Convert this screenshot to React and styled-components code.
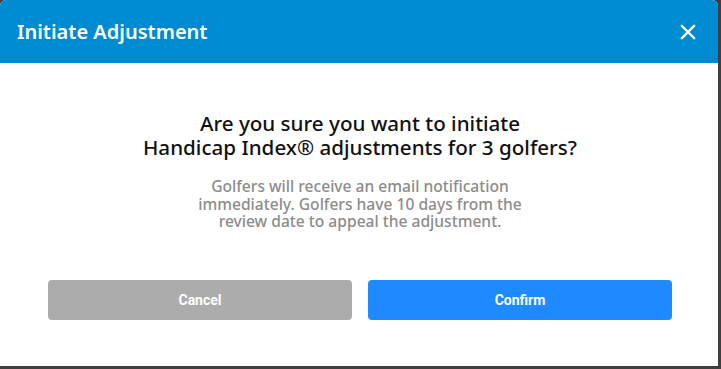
import React from 'react';
import styled, { createGlobalStyle } from 'styled-components';

const Global = createGlobalStyle`
  html, body {
    margin: 0;
    padding: 0;
    background: #3f3f3f;
  }
  body {
    font-family: "Noto Sans", "Open Sans", sans-serif;
  }
`;

const Modal = styled.section`
  width: 718px;
  height: 366px;
  background: #fff;
  border-radius: 6px 6px 0 0;
  overflow: hidden;
  display: flex;
  flex-direction: column;
`;

const Header = styled.header`
  height: 63px;
  background: #008ad2;
  display: flex;
  align-items: center;
  justify-content: space-between;
  padding: 0 22px 0 17px;
  box-sizing: border-box;
`;

const Title = styled.h1`
  margin: 0;
  color: #fff;
  font-size: 20px;
  font-weight: 600;
`;

const Close = styled.button`
  border: 0;
  background: none;
  padding: 0;
  width: 16px;
  height: 16px;
  display: flex;
  cursor: pointer;
`;

const Body = styled.div`
  flex: 1;
  padding: 48px 46px 0 48px;
  display: flex;
  flex-direction: column;
  text-align: center;
`;

const Question = styled.h2`
  margin: 0;
  color: #111;
  font-size: 20.6px;
  line-height: 24px;
  font-weight: 500;
`;

const Note = styled.p`
  margin: 19px 0 0;
  color: #8c8c8c;
  font-size: 15.6px;
  line-height: 17.5px;
  font-weight: 500;
`;

const Actions = styled.div`
  margin-top: 49px;
  display: grid;
  grid-template-columns: 1fr 1fr;
  gap: 16px;
`;

const Button = styled.button`
  height: 40px;
  border: 0;
  border-radius: 4px;
  background: ${(p) => (p.$primary ? '#1f89ff' : '#acacac')};
  color: #fff;
  font-family: "Roboto", sans-serif;
  font-size: 14px;
  font-weight: 700;
  cursor: pointer;
`;

export default () => (
  <>
    <Global />
    <Modal>
      <Header>
        <Title>Initiate Adjustment</Title>
        <Close aria-label="Close">
          <svg width="16" height="16" viewBox="0 0 16 16">
            <path d="M2 2L14 14M14 2L2 14" stroke="#fff" strokeWidth="2.4" strokeLinecap="square" />
          </svg>
        </Close>
      </Header>
      <Body>
        <Question>
          Are you sure you want to initiate
          <br />
          Handicap Index® adjustments for 3 golfers?
        </Question>
        <Note>
          Golfers will receive an email notification
          <br />
          immediately. Golfers have 10 days from the
          <br />
          review date to appeal the adjustment.
        </Note>
        <Actions>
          <Button>Cancel</Button>
          <Button $primary>Confirm</Button>
        </Actions>
      </Body>
    </Modal>
  </>
);
